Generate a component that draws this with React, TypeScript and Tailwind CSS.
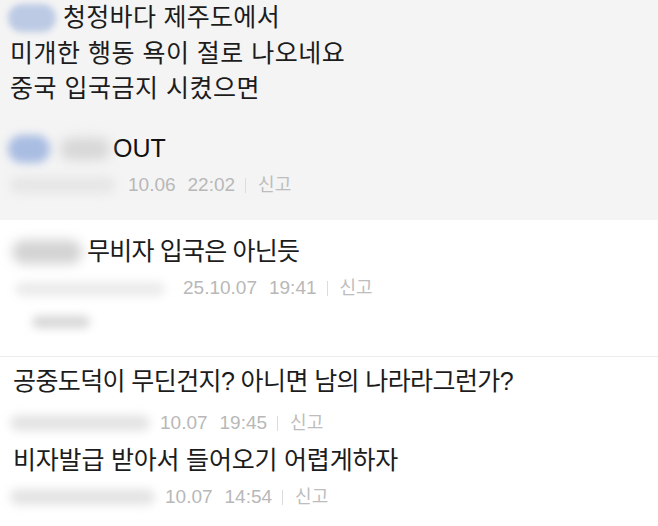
const FONT = "font-['Liberation_Sans','Noto_Sans_CJK_KR',sans-serif]";

type MetaProps = {
  date: string;
  time: string;
  left: string;
};

function Meta({ date, time, left }: MetaProps) {
  return (
    <div className={`flex items-center text-[19px] text-[#b8b8b8] ${left}`}>
      <span>{date}</span>
      <span className="ml-[12px]">{time}</span>
      <span className="ml-[10px] mr-[12px] h-[15px] w-px bg-[#dcdcdc]" />
      <span className="text-[18px] text-[#bdbdbd]">신고</span>
    </div>
  );
}

function Blob({ className }: { className: string }) {
  return <div className={`shrink-0 rounded-full ${className}`} />;
}

export default function App() {
  return (
    <div className={`w-[658px] h-[526px] overflow-hidden bg-white text-[#1c1c1c] ${FONT}`}>
      {/* first comment, grey block */}
      <section className="h-[220px] bg-[#f4f4f4]">
        <div className="flex h-[36px] items-center pl-[8px] text-[25px] tracking-[0.3px]">
          <Blob className="h-[28px] w-[48px] rounded-[6px] bg-[#bccae4] blur-[3px]" />
          <span className="ml-[7px]">청정바다 제주도에서</span>
        </div>
        <div className="flex h-[35px] items-center pl-[10px] text-[25px] tracking-[0.5px]">미개한 행동 욕이 절로 나오네요</div>
        <div className="flex h-[35px] items-center pl-[10px] text-[25px] tracking-[0.5px]">중국 입국금지 시켰으면</div>

        <div className="mt-[25px] flex h-[36px] items-center pl-[8px] text-[25px]">
          <Blob className="h-[28px] w-[42px] bg-[#a9bde2] blur-[4px]" />
          <Blob className="ml-[10px] h-[22px] w-[50px] bg-[#d7d7d7] blur-[6px]" />
          <span className="ml-[3px] text-[#111]">OUT</span>
        </div>
        <div className="relative flex h-[36px] items-center">
          <Blob className="absolute left-[10px] top-[10px] h-[16px] w-[105px] bg-[#e6e6e6] blur-[5px]" />
          <Meta date="10.06" time="22:02" left="pl-[128px]" />
        </div>
      </section>

      {/* second comment */}
      <section className="h-[137px] border-b border-[#ececec] pt-[14px]">
        <div className="flex h-[36px] items-center pl-[12px] text-[25px] tracking-[-0.8px]">
          <Blob className="h-[24px] w-[70px] bg-[#d3d3d3] blur-[6px]" />
          <span className="ml-[5px]">무비자 입국은 아닌듯</span>
        </div>
        <div className="relative flex h-[36px] items-center">
          <Blob className="absolute left-[15px] top-[12px] h-[14px] w-[150px] bg-[#ebebeb] blur-[5px]" />
          <Meta date="25.10.07" time="19:41" left="pl-[183px]" />
        </div>
        <div className="flex h-[32px] items-center pl-[32px]">
          <Blob className="h-[12px] w-[58px] bg-[#d6d6d6] blur-[5px]" />
        </div>
      </section>

      {/* replies */}
      <section className="pt-[7px]">
        <div className="flex h-[36px] items-center pl-[13px] text-[25px] tracking-[-0.6px]">
          공중도덕이 무딘건지? 아니면 남의 나라라그런가?
        </div>
        <div className="relative mt-[5px] flex h-[36px] items-center">
          <Blob className="absolute left-[10px] top-[10px] h-[16px] w-[140px] bg-[#e4e4e4] blur-[5px]" />
          <Meta date="10.07" time="19:45" left="pl-[160px]" />
        </div>
        <div className="mt-[2px] flex h-[36px] items-center pl-[13px] text-[25px] tracking-[-0.2px]">
          비자발급 받아서 들어오기 어렵게하자
        </div>
        <div className="relative flex h-[36px] items-center">
          <Blob className="absolute left-[10px] top-[10px] h-[16px] w-[145px] bg-[#e4e4e4] blur-[5px]" />
          <Meta date="10.07" time="14:54" left="pl-[165px]" />
        </div>
      </section>
    </div>
  );
}
